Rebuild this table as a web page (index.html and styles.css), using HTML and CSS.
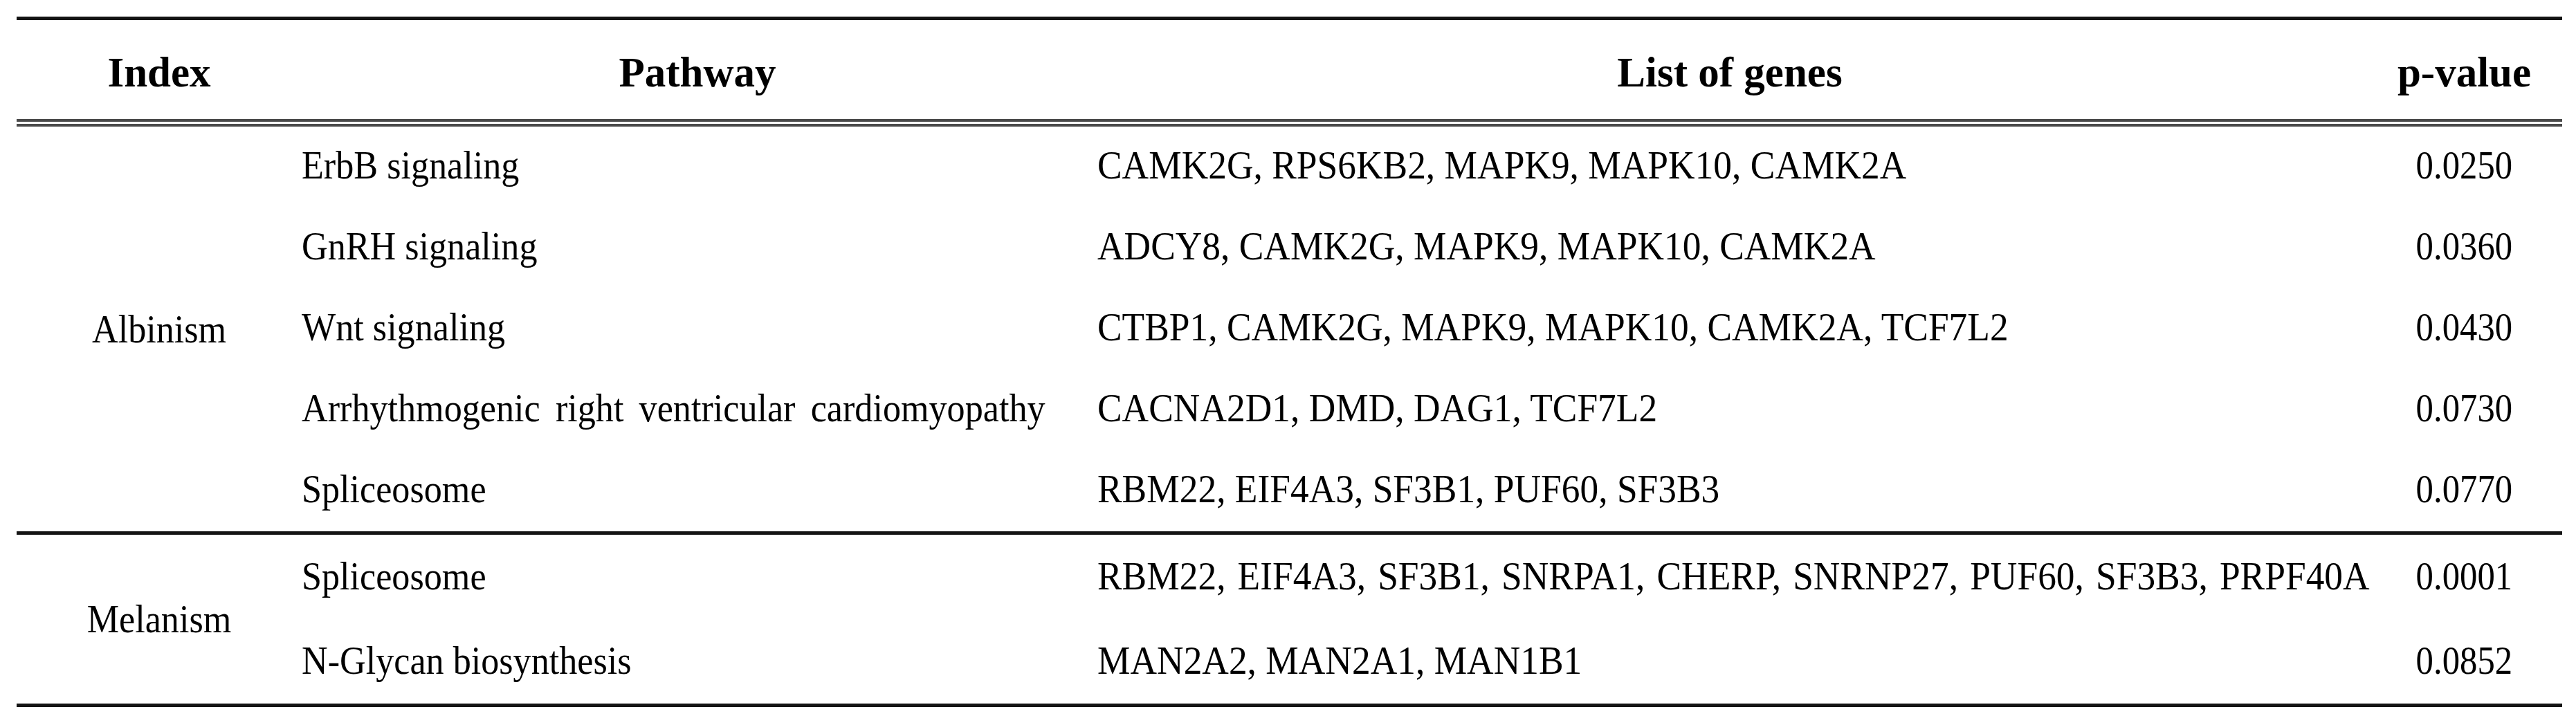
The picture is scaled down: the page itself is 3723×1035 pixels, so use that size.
FILE: index.html
```html
<!DOCTYPE html>
<html lang="en">
<head>
<meta charset="utf-8">
<title>Pathway enrichment</title>
<link rel="stylesheet" href="styles.css">
</head>
<body>
<div class="sheet">
<table class="pathways">
  <colgroup>
    <col class="c-index">
    <col class="c-path">
    <col class="c-genes">
    <col class="c-p">
  </colgroup>
  <thead>
    <tr>
      <th>Index</th>
      <th>Pathway</th>
      <th>List of genes</th>
      <th>p-value</th>
    </tr>
  </thead>
  <tbody class="grp grp-a">
    <tr>
      <td class="idx" rowspan="5"><span class="t tc">Albinism</span></td>
      <td class="path"><span class="t">ErbB signaling</span></td>
      <td class="genes"><span class="t tg">CAMK2G, RPS6KB2, MAPK9, MAPK10, CAMK2A</span></td>
      <td class="pv"><span class="t tc tn">0.0250</span></td>
    </tr>
    <tr>
      <td class="path"><span class="t">GnRH signaling</span></td>
      <td class="genes"><span class="t tg">ADCY8, CAMK2G, MAPK9, MAPK10, CAMK2A</span></td>
      <td class="pv"><span class="t tc tn">0.0360</span></td>
    </tr>
    <tr>
      <td class="path"><span class="t">Wnt signaling</span></td>
      <td class="genes"><span class="t tg">CTBP1, CAMK2G, MAPK9, MAPK10, CAMK2A, TCF7L2</span></td>
      <td class="pv"><span class="t tc tn">0.0430</span></td>
    </tr>
    <tr>
      <td class="path"><span class="t wide">Arrhythmogenic right ventricular cardiomyopathy</span></td>
      <td class="genes"><span class="t tg">CACNA2D1, DMD, DAG1, TCF7L2</span></td>
      <td class="pv"><span class="t tc tn">0.0730</span></td>
    </tr>
    <tr class="last">
      <td class="path"><span class="t">Spliceosome</span></td>
      <td class="genes"><span class="t tg">RBM22, EIF4A3, SF3B1, PUF60, SF3B3</span></td>
      <td class="pv"><span class="t tc tn">0.0770</span></td>
    </tr>
  </tbody>
  <tbody class="grp grp-b">
    <tr>
      <td class="idx" rowspan="2"><span class="t tc">Melanism</span></td>
      <td class="path"><span class="t">Spliceosome</span></td>
      <td class="genes"><span class="t tg spaced">RBM22, EIF4A3, SF3B1, SNRPA1, CHERP, SNRNP27, PUF60, SF3B3, PRPF40A</span></td>
      <td class="pv"><span class="t tc tn">0.0001</span></td>
    </tr>
    <tr class="last">
      <td class="path"><span class="t">N-Glycan biosynthesis</span></td>
      <td class="genes"><span class="t tg">MAN2A2, MAN2A1, MAN1B1</span></td>
      <td class="pv"><span class="t tc tn">0.0852</span></td>
    </tr>
  </tbody>
</table>
</div>
</body>
</html>
```

FILE: styles.css
```css
html, body {
  margin: 0;
  padding: 0;
  background: #ffffff;
}

body {
  font-family: "Liberation Serif", "Times New Roman", serif;
  color: #000000;
}

.sheet {
  padding: 24px 20px 0 24px;
}

.pathways {
  width: 3679px;
  table-layout: fixed;
  border-collapse: separate;
  border-spacing: 0;
}

.c-index { width: 412px; }
.c-path  { width: 1144px; }
.c-genes { width: 1840px; }
.c-p     { width: 283px; }

.pathways th,
.pathways td {
  box-sizing: border-box;
  padding: 0;
  white-space: nowrap;
}

.pathways th {
  font-weight: 700;
  font-size: 61px;
  line-height: 70px;
  text-align: center;
  padding: 41px 0 32px;
  border-top: 5px solid #141414;
  border-bottom: 11px double #4a4a4a;
}

.pathways td {
  font-size: 57px;
  line-height: 60px;
  vertical-align: middle;
}

.grp-a td {
  padding-top: 26px;
  padding-bottom: 31px;
}

.grp-b td {
  padding-top: 30px;
  padding-bottom: 32px;
}

.pathways td.idx {
  text-align: center;
  padding: 0;
  border-bottom: 5px solid #141414;
}

.pathways tr.last td {
  border-bottom: 5px solid #141414;
}

.path {
  text-align: left;
  padding-left: 1px;
}

.genes {
  text-align: left;
  padding-left: 6px !important;
}

.pv {
  text-align: center;
}

.t {
  display: inline-block;
  transform: scaleX(0.915);
  transform-origin: left center;
}

.tg {
  transform: scaleX(0.937);
}

.tc {
  transform-origin: center center;
}

.tn {
  transform: scaleX(0.89);
}

.wide {
  word-spacing: 10px;
}

.spaced {
  word-spacing: 4px;
}
```
